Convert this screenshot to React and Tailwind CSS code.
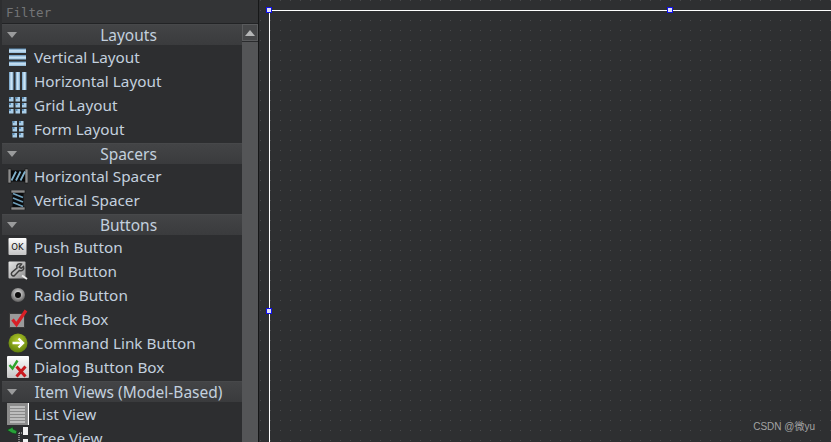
import React from "react";

const Ic = ({ children, vb = "0 0 20 20", s = 20 }) => (
  <svg width={s} height={s} viewBox={vb} className="block shrink-0">{children}</svg>
);
const grad = (
  <defs>
    <linearGradient id="bl" x1="0" y1="0" x2="0" y2="1"><stop offset="0" stopColor="#5d8fb8" /><stop offset="0.5" stopColor="#cfe6f7" /><stop offset="1" stopColor="#8fb9d8" /></linearGradient>
    <linearGradient id="blh" x1="0" y1="0" x2="1" y2="0"><stop offset="0" stopColor="#6b9cc4" /><stop offset="0.5" stopColor="#d4ebfa" /><stop offset="1" stopColor="#7fa9c9" /></linearGradient>
    <linearGradient id="btn" x1="0" y1="0" x2="0" y2="1"><stop offset="0" stopColor="#ffffff" /><stop offset="1" stopColor="#c4c4c4" /></linearGradient>
    <linearGradient id="tl" x1="0" y1="0" x2="1" y2="1"><stop offset="0" stopColor="#e8e8e8" /><stop offset="1" stopColor="#8e8e8e" /></linearGradient>
    <radialGradient id="grn" cx="0.5" cy="0.35" r="0.7"><stop offset="0" stopColor="#b5cc2e" /><stop offset="1" stopColor="#5a7a08" /></radialGradient>
    <radialGradient id="rad" cx="0.5" cy="0.4" r="0.6"><stop offset="0" stopColor="#f0f0f0" /><stop offset="1" stopColor="#5c5c5c" /></radialGradient>
  </defs>
);
const cells = (xs, ys, s, c) => xs.flatMap((x) => ys.map((y) => <rect key={x + "-" + y} x={x} y={y} width={s} height={s} fill={c} />));

const icons = {
  v: <Ic><rect x="1" y="1.500" width="17" height="4.500" fill="url(#bl)" /><rect x="1" y="8" width="17" height="4.500" fill="url(#bl)" /><rect x="1" y="14.500" width="17" height="4.500" fill="url(#bl)" /></Ic>,
  h: <Ic><rect x="1" y="1" width="4.500" height="18" fill="url(#blh)" /><rect x="7.500" y="1" width="4.500" height="18" fill="url(#blh)" /><rect x="14" y="1" width="4.500" height="18" fill="url(#blh)" /></Ic>,
  g: <Ic>{cells([1, 7.5, 14], [2, 8, 14], 4.5, "#a9cde8")}{cells([1, 7.5, 14], [2, 8, 14], 2, "#5c8db5")}</Ic>,
  f: <Ic>{cells([4.5, 11], [2, 8, 14], 4.5, "#a9cde8")}{cells([4.5, 11], [2, 8, 14], 2, "#5c8db5")}</Ic>,
  hs: <Ic><rect x="0" y="3" width="3" height="14" fill="#8c8c8c" stroke="#111" strokeWidth="0.600" /><rect x="17" y="3" width="3" height="14" fill="#8c8c8c" stroke="#111" strokeWidth="0.600" /><rect x="3" y="4.500" width="14" height="11" fill="#08090a" /><path d="M3.500 14.500L8 5.500M8 14.500L12.500 5.500M12.500 14.500L17 5.500" stroke="#7fb0cc" strokeWidth="1.800" /></Ic>,
  vs: <Ic><rect x="3" y="0" width="14" height="3" fill="#8c8c8c" stroke="#111" strokeWidth="0.600" /><rect x="3" y="17" width="14" height="3" fill="#8c8c8c" stroke="#111" strokeWidth="0.600" /><rect x="4.500" y="3" width="11" height="14" fill="#08090a" /><path d="M5 3.500l10 4M5 8l10 4M5 12.500l10 4" stroke="#6d9db8" strokeWidth="1.800" /></Ic>,
  ok: <Ic><rect x="0.500" y="1" width="18" height="17" rx="1" fill="url(#btn)" /><text x="9.500" y="13" textAnchor="middle" fontSize="8.500" fontFamily="'DejaVu Sans'" fill="#111">OK</text></Ic>,
  tool: <Ic><rect x="0.500" y="0.500" width="17" height="17" rx="1" fill="url(#tl)" /><path d="M13.500 3c-3-1.200-5.500 1-4.500 4L3.800 11.500c-1.500 2.200.8 4.300 2.800 3l4.700-5c3 1 5.200-1 4.200-4l-2.300 1.800-2-1.300z" fill="none" stroke="#3e3e3e" strokeWidth="1.500" /><path d="M14 14.500l5 3.500" stroke="#ececec" strokeWidth="2" /></Ic>,
  radio: <Ic><circle cx="10" cy="10" r="7" fill="url(#rad)" /><circle cx="10" cy="10" r="3" fill="#0c0c0c" /></Ic>,
  check: <Ic><rect x="1.500" y="4.500" width="15" height="14" fill="#9a9a9a" stroke="#3a3a3a" strokeWidth="1" /><path d="M4.500 10.500l4 5 9.500-14" fill="none" stroke="#d81f26" strokeWidth="3.200" /></Ic>,
  cmd: <Ic><circle cx="10" cy="10" r="9.500" fill="url(#grn)" /><path d="M4.500 10H14M10.500 5.500l4.500 4.500-4.500 4.500" fill="none" stroke="#fff" strokeWidth="2.400" /></Ic>,
  dlg: <Ic vb="0 0 22 22" s={22}><rect x="0" y="0" width="22" height="22" rx="1" fill="url(#btn)" /><path d="M2.500 9l3 3.500 5-8" fill="none" stroke="#2fa52c" strokeWidth="2.400" /><path d="M9.500 10.500l9 10M18.500 10.500l-9 10" stroke="#c8191e" strokeWidth="3" /></Ic>,
  list: <Ic vb="0 0 22 22" s={22}><rect x="0" y="0" width="20" height="22" fill="#8b8b8b" /><rect x="20.500" y="0" width="1.500" height="22" fill="#fff" />{[3, 6, 9, 12, 15, 18].map((y) => <rect key={y} x="3" y={y} width="15" height="2" fill="#bdbdbd" />)}</Ic>,
  tree: <Ic vb="0 0 22 22" s={22}><path d="M0 3l6-3v2l4 2-1 3-4-1z" fill="#29a33a" stroke="#0c3d14" strokeWidth="0.600" /><rect x="16" y="0" width="5" height="8" fill="#f2f2f2" /><path d="M12 6h3M12 6v10" stroke="#ddd" strokeWidth="1" strokeDasharray="1 1" /><rect x="16" y="12" width="5" height="8" fill="#f2f2f2" /></Ic>,
};

const Header = ({ title, className = "" }) => (
  <div className={`relative flex h-[21px] items-center justify-center border-t border-[#47484a] bg-[linear-gradient(#434446,#3a3b3d)] pl-[13px] pt-[1px] ${className}`}>
    <svg width="10" height="6" viewBox="0 0 10 6" className="absolute left-[5px] top-[7px]"><path d="M0 0h10L5 6z" fill="#9a9b9c" /></svg>
    <span className="whitespace-nowrap text-[15.5px] leading-[19px] text-[#c3d0de]">{title}</span>
  </div>
);

const Item = ({ icon, label }) => (
  <div className="flex h-6 items-center gap-[6px] pl-[6px]">
    <span className="flex w-[20px] justify-center">{icon}</span>
    <span className="whitespace-nowrap text-[15.3px] leading-[20px] text-[#c3d0de]">{label}</span>
  </div>
);

const Handle = ({ className }) => (
  <div className={`absolute h-[6px] w-[6px] border border-[#1010f0] bg-[#dcdcf4] ${className}`} />
);

export default function App() {
  return (
    <div className="flex h-[442px] w-[831px] overflow-hidden bg-[#2d2e30] font-['Noto_Sans','Liberation_Sans',sans-serif]">
      <svg width="0" height="0" className="absolute">{grad}</svg>
      <aside className="flex w-[258px] shrink-0 flex-col pl-[2px]">
        <div className="flex h-[24px] shrink-0 items-center border-b border-[#222325] bg-[#333436] pl-1 pt-[4px] font-['DejaVu_Sans_Mono',monospace] text-[12.5px] text-[#737476]">Filter</div>
        <div className="flex min-h-0 flex-1">
          <div className="w-[240px] shrink-0 overflow-hidden">
            <Header title="Layouts" />
            <Item icon={icons.v} label="Vertical Layout" />
            <Item icon={icons.h} label="Horizontal Layout" />
            <Item icon={icons.g} label="Grid Layout" />
            <Item icon={icons.f} label="Form Layout" />
            <Header title="Spacers" className="mt-[2px]" />
            <Item icon={icons.hs} label="Horizontal Spacer" />
            <Item icon={icons.vs} label="Vertical Spacer" />
            <Header title="Buttons" className="mt-[2px]" />
            <Item icon={icons.ok} label="Push Button" />
            <Item icon={icons.tool} label="Tool Button" />
            <Item icon={icons.radio} label="Radio Button" />
            <Item icon={icons.check} label="Check Box" />
            <Item icon={icons.cmd} label="Command Link Button" />
            <Item icon={icons.dlg} label="Dialog Button Box" />
            <Header title="Item Views (Model-Based)" className="mt-[2px]" />
            <Item icon={icons.list} label="List View" />
            <Item icon={icons.tree} label="Tree View" />
          </div>
          <div className="flex w-[16px] shrink-0 flex-col bg-[#3c3d3f]">
            <div className="flex h-[17px] items-center justify-center border border-[#5a5b5d] bg-[#464749]">
              <svg width="10" height="6" viewBox="0 0 10 6"><path d="M5 0l5 6H0z" fill="#b5b6b7" /></svg>
            </div>
            <div className="flex-1 border-t border-[#2a2b2d] bg-[#545557]" />
          </div>
        </div>
      </aside>
      <main className="relative flex-1 border-l border-[#161718] bg-[#2e2f31] bg-[radial-gradient(circle_at_0.5px_0.5px,#48494b_0.6px,transparent_0.6px)] bg-[length:10px_10px] bg-[position:1px_0px] pl-[10px] pt-[10px]">
        <div className="h-full w-full border-l border-t border-white" />
        <Handle className="left-[7px] top-[7px]" />
        <Handle className="left-[408px] top-[7px]" />
        <Handle className="left-[7px] top-[308px]" />
        <span className="absolute bottom-[8px] right-[16px] font-['Liberation_Sans','Noto_Sans_CJK_SC',sans-serif] text-[10px] text-[#a4a4a4]">CSDN @微yu</span>
      </main>
    </div>
  );
}
